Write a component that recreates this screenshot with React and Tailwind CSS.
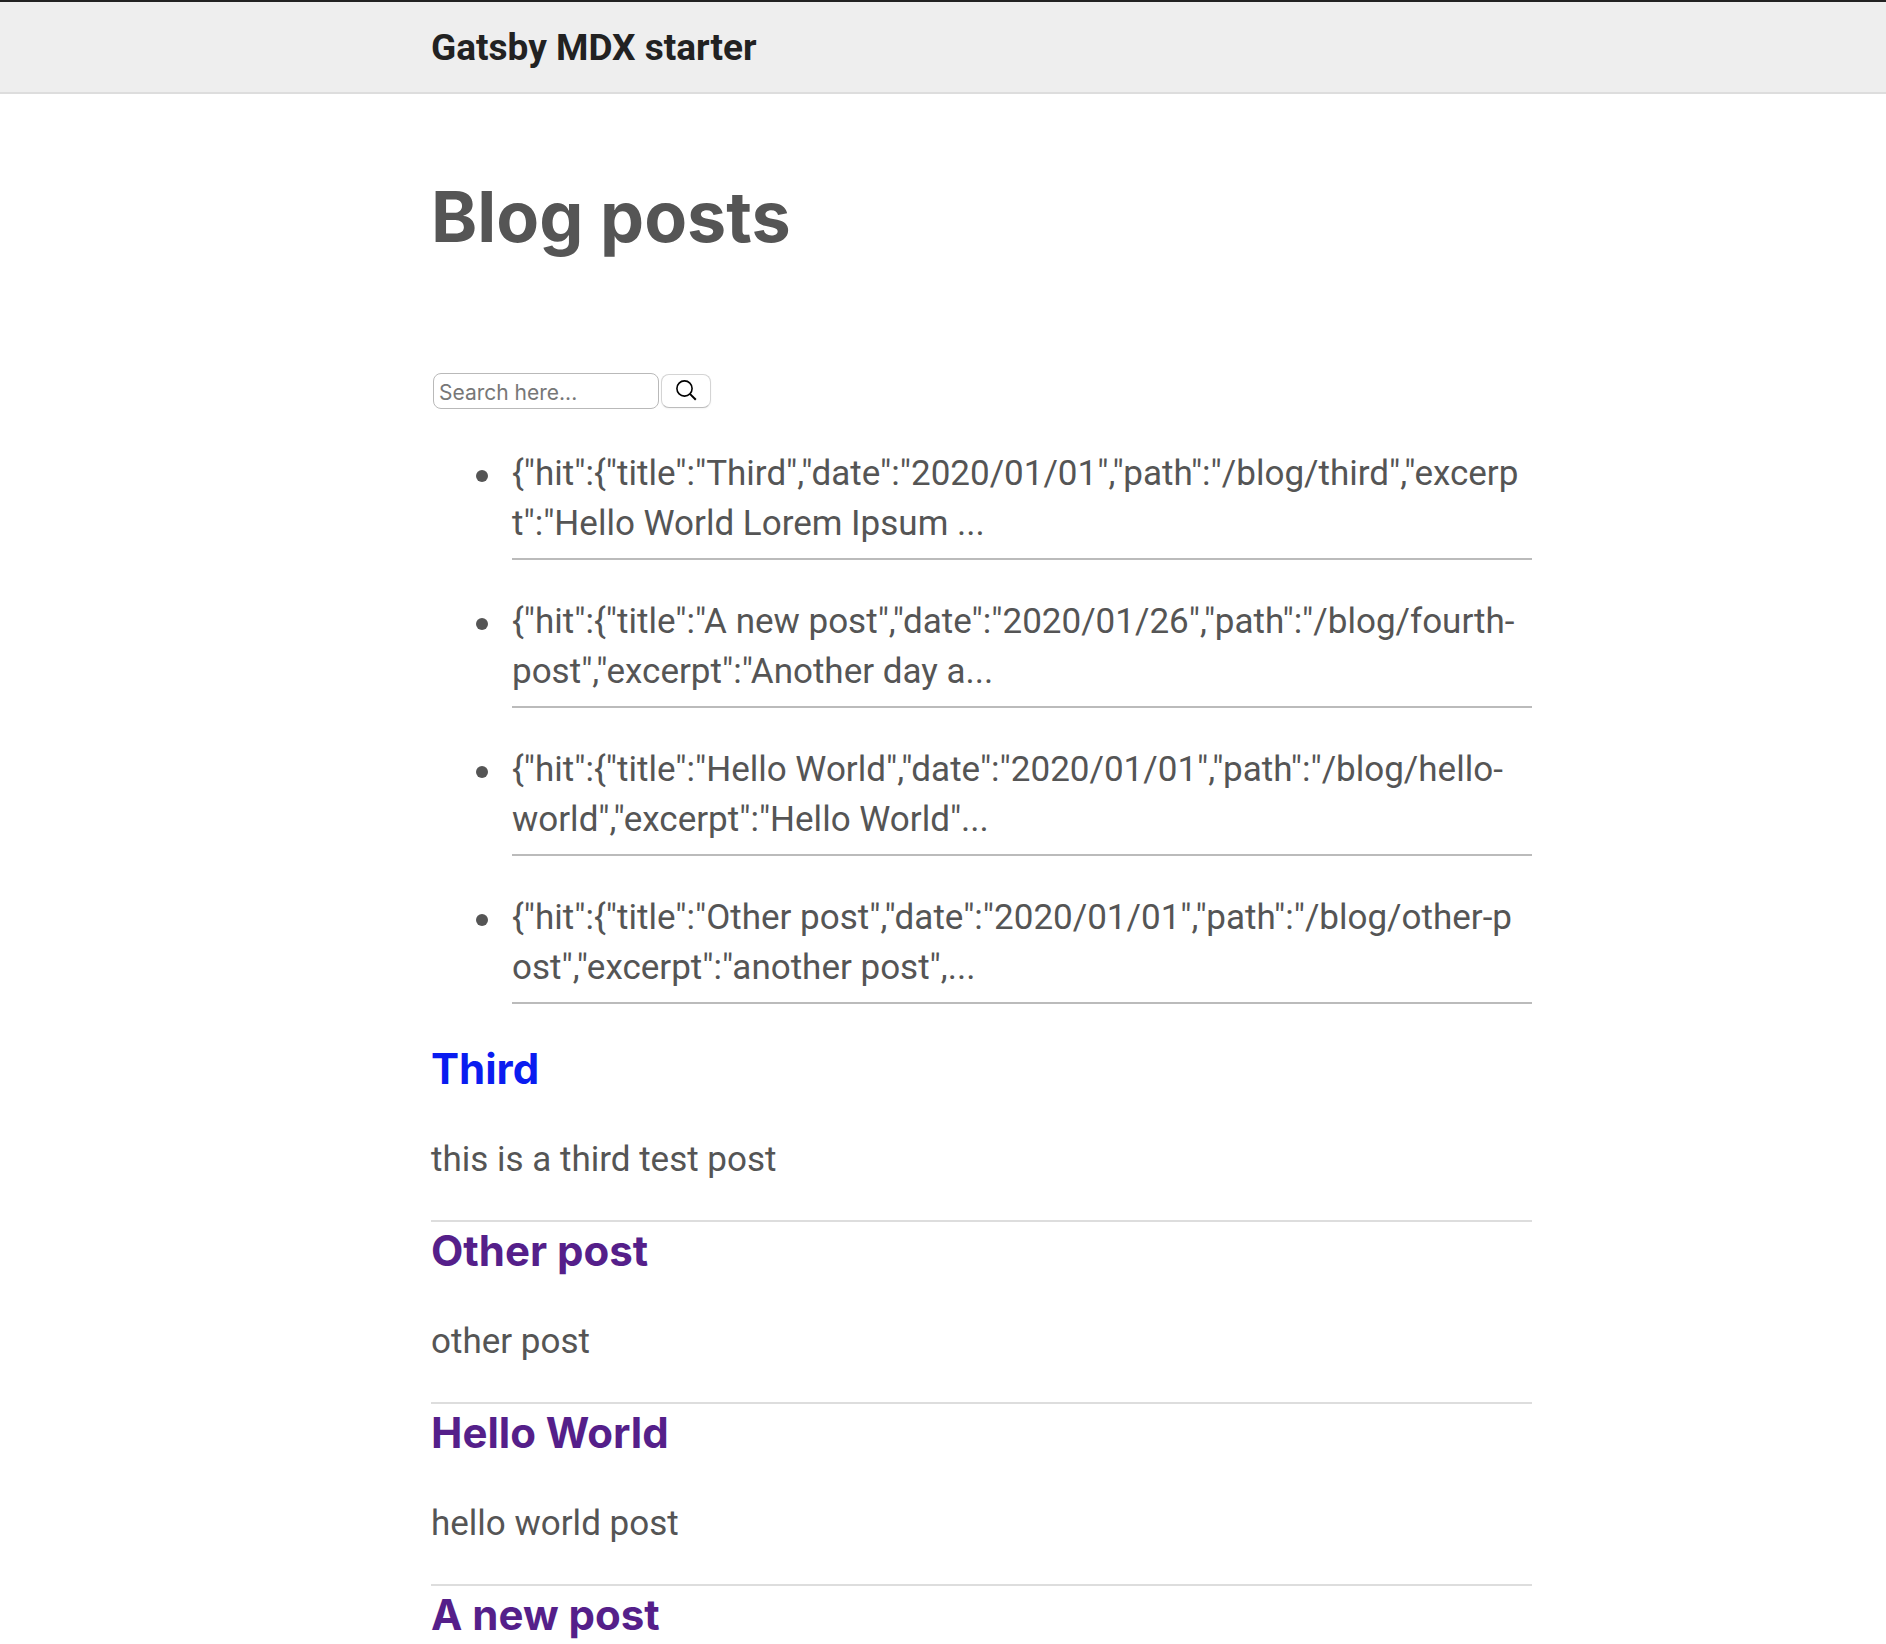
const hits = [
  ['{"hit":{"title":"Third","date":"2020/01/01","path":"/blog/third","excerp', 't":"Hello World Lorem Ipsum ...'],
  ['{"hit":{"title":"A new post","date":"2020/01/26","path":"/blog/fourth-', 'post","excerpt":"Another day a...'],
  ['{"hit":{"title":"Hello World","date":"2020/01/01","path":"/blog/hello-', 'world","excerpt":"Hello World"...'],
  ['{"hit":{"title":"Other post","date":"2020/01/01","path":"/blog/other-p', 'ost","excerpt":"another post",...'],
];

const posts = [
  { title: "Third", text: "this is a third test post", visited: false },
  { title: "Other post", text: "other post", visited: true },
  { title: "Hello World", text: "hello world post", visited: true },
  { title: "A new post", text: "", visited: true },
];

function SearchForm() {
  return (
    <form
      className="flex items-center gap-0.5 pl-px"
      onSubmit={(e) => e.preventDefault()}
    >
      <input
        type="text"
        aria-label="Search"
        placeholder="Search here..."
        className="h-9 w-[226px] rounded-lg border border-[#b9b9b9] bg-white px-[5px] pt-0.5 font-['Inter',sans-serif] text-[21px] leading-8 text-black placeholder:text-[#777]"
      />
      <button
        type="submit"
        aria-label="Submit search"
        className="flex h-[34px] w-[50px] items-center justify-center rounded-lg border border-[#d4d4d4] border-b-[#bcbcbc] bg-white pb-0.5 shadow-xs"
      >
        <svg width="22" height="22" viewBox="0 0 22 22" fill="none" stroke="#000" strokeWidth="1.6">
          <circle cx="9.5" cy="9.5" r="7.6" />
          <path d="M14.9 14.9 20.8 20.8" strokeWidth="2" />
        </svg>
      </button>
    </form>
  );
}

export default function App() {
  return (
    <div className="h-screen overflow-hidden bg-white font-['Roboto',sans-serif] text-[35px] leading-[50px] text-[#555]">
      <header className="border-y-2 border-t-[#222] border-b-[#ddd] bg-[#eee] pt-[21px] pr-[354px] pb-[19px] pl-[431px]">
        <a href="#" className="block text-[37px] leading-[50px] font-bold text-[#222]">
          Gatsby MDX starter
        </a>
      </header>
      <main className="pt-[78px] pr-[354px] pl-[431px]">
        <h1 className="font-['Inter',sans-serif] text-[70px] leading-[90px] font-bold">Blog posts</h1>
        <div className="pt-[111px] pl-px">
          <SearchForm />
        </div>
        <ul className="pt-10 pl-[45px]">
          {hits.map(([first, second]) => (
            <li key={first} className="mb-[37px] grid grid-cols-[36px_1fr] last:mb-9">
              <span aria-hidden="true" className="mt-[21px] size-3 rounded-full bg-[#555]" />
              <div className="min-w-0 border-b-2 border-[#bbb] pb-[9px] whitespace-nowrap">
                {first}
                <br />
                {second}
              </div>
            </li>
          ))}
        </ul>
        {posts.map((post) => (
          <article key={post.title} className="border-b-2 border-[#ddd] pb-[35px]">
            <h2 className="mb-[37px] font-['Inter',sans-serif] text-[42px] leading-[58px] font-bold">
              <a href="#" className={post.visited ? "text-[#551f8a]" : "text-[#0a1cf0]"}>
                {post.title}
              </a>
            </h2>
            <p>{post.text}</p>
          </article>
        ))}
      </main>
    </div>
  );
}
